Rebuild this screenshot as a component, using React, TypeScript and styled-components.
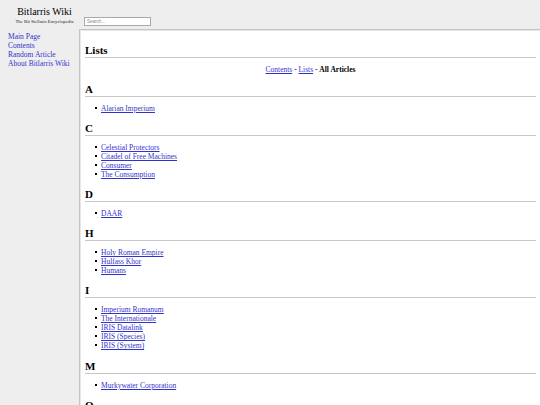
import React from "react";
import styled, { createGlobalStyle } from "styled-components";

const Global = createGlobalStyle`
  html, body { margin: 0; padding: 0; background: #eeeeee; }
  body { font-family: "Liberation Serif", "Times New Roman", serif; color: #000; }
`;

const Page = styled.div`
  display: flex;
  flex-direction: column;
  min-height: 100vh;
`;

const Header = styled.header`
  display: flex;
  align-items: flex-start;
  height: 29px;
  box-sizing: border-box;
  padding-top: 6px;
`;

const Logo = styled.div`
  width: 73px;
  margin-left: 8px;
  text-align: center;
`;

const Title = styled.div`
  font-size: 10px;
  line-height: 12px;
`;

const Tagline = styled.div`
  font-size: 4.75px;
  line-height: 6px;
  margin-top: 1px;
  color: #222;
`;

const Search = styled.input`
  margin: 11px 0 0 3px;
  width: 67px;
  height: 9px;
  box-sizing: border-box;
  border: 1px solid #a9a9a9;
  padding: 0 2px;
  font-family: "Liberation Sans", Arial, sans-serif;
  font-size: 4.5px;
  background: #fff;
  outline: none;
  &::placeholder { color: #8a8a8a; }
`;

const Body = styled.div`
  display: flex;
  flex: 1;
`;

const Sidebar = styled.nav`
  width: 79px;
  flex-shrink: 0;
  box-sizing: border-box;
  padding: 2.5px 0 0 8px;
  display: flex;
  flex-direction: column;
`;

const NavLink = styled.a`
  font-size: 7.5px;
  line-height: 9px;
  color: #3333cc;
  text-decoration: none;
`;

const Main = styled.main`
  flex: 1;
  background: #fff;
  border-top: 1px solid #c4c4c4;
  border-left: 1px solid #c4c4c4;
  padding: 0 4px 0 5px;
  box-shadow: inset 1px 1px 0 #e6e6e6;
`;

const PageTitle = styled.h1`
  margin: 13.5px 0 0;
  font-size: 11px;
  line-height: 13px;
  font-weight: bold;
  border-bottom: 1px solid #c8c8c8;
`;

const Crumbs = styled.div`
  margin-top: 7px;
  text-align: center;
  font-size: 7.5px;
  line-height: 9px;
`;

const Crumb = styled.a`
  color: #3333cc;
  text-decoration: underline;
`;

const Current = styled.b``;

const Section = styled.section`
  margin-top: 9.2px;
`;

const Letter = styled.h2`
  margin: 0;
  font-size: 11px;
  line-height: 13px;
  font-weight: bold;
  border-bottom: 1px solid #c8c8c8;
`;

const List = styled.ul`
  margin: 7px 0 0;
  padding-left: 10px;
  list-style: none;
`;

const Item = styled.li`
  font-size: 7.5px;
  line-height: 9px;
  &::before {
    content: "";
    display: inline-block;
    width: 2px;
    height: 2px;
    background: #000;
    margin-right: 4px;
    vertical-align: 2px;
  }
`;

const ItemLink = styled.a`
  color: #3333cc;
  text-decoration: underline;
`;

const sections: [string, string[]][] = [
  ["A", ["Alarian Imperium"]],
  ["C", ["Celestial Protectors", "Citadel of Free Machines", "Consumer", "The Consumption"]],
  ["D", ["DAAR"]],
  ["H", ["Holy Roman Empire", "Hulfass Khor", "Humans"]],
  ["I", ["Imperium Romanum", "The Internationale", "IRIS Datalink", "IRIS (Species)", "IRIS (System)"]],
  ["M", ["Murkywater Corporation"]],
  ["O", ["Orion Syndicate"]],
];

export default function App() {
  return (
    <>
      <Global />
      <Page>
        <Header>
          <Logo>
            <Title>Bitlarris Wiki</Title>
            <Tagline>The Bit Stellaris Encyclopedia</Tagline>
          </Logo>
          <Search placeholder="Search..." />
        </Header>
        <Body>
          <Sidebar>
            <NavLink href="#">Main Page</NavLink>
            <NavLink href="#">Contents</NavLink>
            <NavLink href="#">Random Article</NavLink>
            <NavLink href="#">About Bitlarris Wiki</NavLink>
          </Sidebar>
          <Main>
            <PageTitle>Lists</PageTitle>
            <Crumbs>
              <Crumb href="#">Contents</Crumb> - <Crumb href="#">Lists</Crumb> - <Current>All Articles</Current>
            </Crumbs>
            {sections.map(([letter, items]) => (
              <Section key={letter}>
                <Letter>{letter}</Letter>
                <List>
                  {items.map((it) => (
                    <Item key={it}>
                      <ItemLink href="#">{it}</ItemLink>
                    </Item>
                  ))}
                </List>
              </Section>
            ))}
          </Main>
        </Body>
      </Page>
    </>
  );
}
